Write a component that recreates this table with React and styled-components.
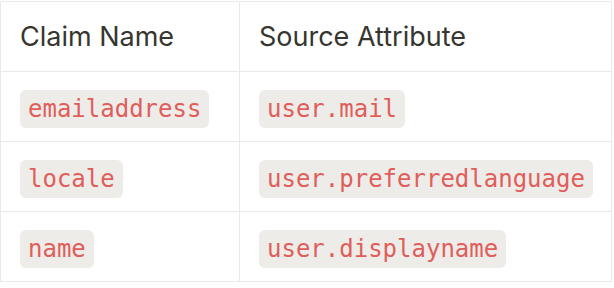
import React from 'react'
import styled, { createGlobalStyle } from 'styled-components'

const GlobalStyle = createGlobalStyle`
  body {
    margin: 0;
    background: #fff;
  }
`

const Table = styled.table`
  margin-top: 1px;
  width: 612px;
  border-collapse: collapse;
  table-layout: fixed;
  font-family: Inter, "Noto Sans", sans-serif;
  color: #37352f;
`

const Col = styled.col`
  width: ${props => props.$width};
`

const HeadCell = styled.th`
  height: 69px;
  padding: 0 19px;
  border: 1px solid #e9e9e7;
  text-align: left;
  vertical-align: middle;
  font-weight: 400;
  font-size: 27px;
`

const Cell = styled.td`
  height: 65px;
  padding: 4px 19px 0;
  border: 1px solid #e9e9e7;
  vertical-align: middle;
`

const Code = styled.code`
  display: inline-block;
  padding: 4px 8px;
  border-radius: 6px;
  background: #edece9;
  color: #e05d5a;
  font-family: "DejaVu Sans Mono", monospace;
  font-size: 24px;
  line-height: 30px;
`

const rows = [
  ['emailaddress', 'user.mail'],
  ['locale', 'user.preferredlanguage'],
  ['name', 'user.displayname'],
]

const App = () => {
  return (
    <>
      <GlobalStyle />
      <Table>
        <colgroup>
          <Col $width="239px" />
          <Col $width="auto" />
        </colgroup>
        <thead>
          <tr>
            <HeadCell>Claim Name</HeadCell>
            <HeadCell>Source Attribute</HeadCell>
          </tr>
        </thead>
        <tbody>
          {rows.map(([claim, source]) => (
            <tr key={claim}>
              <Cell><Code>{claim}</Code></Cell>
              <Cell><Code>{source}</Code></Cell>
            </tr>
          ))}
        </tbody>
      </Table>
    </>
  )
}

export default App
